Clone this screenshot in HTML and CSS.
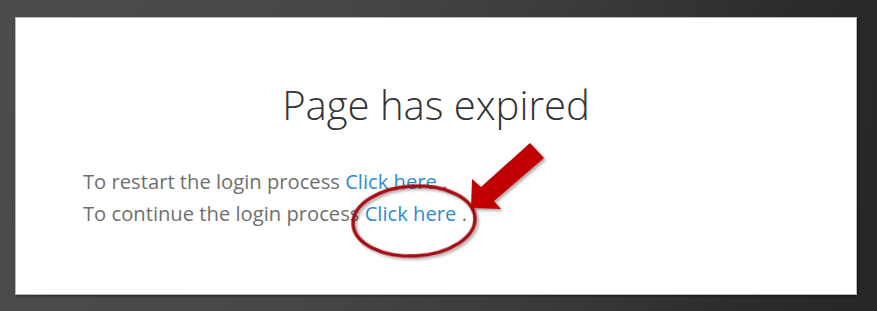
FILE: index.html
```html
<!DOCTYPE html>
<html lang="en">
  <head>
    <meta charset="UTF-8" />
    <meta name="viewport" content="width=device-width, initial-scale=1.0" />
    <title>Page has expired</title>
    <link rel="stylesheet" href="styles.css">
  </head>
  <body>
    <div class="panel">
      <h1 class="title">Page has expired</h1>
      <p class="line">To restart the login process <a href="#">Click here</a> .</p>
      <p class="line">To continue the login process <a href="#">Click here</a> .</p>
    </div>

    <!-- annotation drawn on top of the screenshot -->
    <svg class="marks" width="877" height="311" viewBox="0 0 877 311">
      <defs>
        <filter id="shade" x="-20%" y="-20%" width="150%" height="150%">
          <feDropShadow dx="2" dy="2" stdDeviation="1.5" flood-color="#000" flood-opacity="0.35" />
        </filter>
      </defs>
      <ellipse cx="414" cy="221" rx="61" ry="35" transform="rotate(-3 414 221)"
        fill="none" stroke="#a50d12" stroke-width="3.5" filter="url(#shade)" />
      <polygon points="530,143 544,158 494,201 501,209 471,208 472,179 481,187"
        fill="#c00000" filter="url(#shade)" />
    </svg>
  </body>
</html>
```

FILE: styles.css
```css
html,
body {
  margin: 0;
  height: 100%;
}

body {
  position: relative;
  overflow: hidden;
  background: linear-gradient(100deg, #4c4c4c 0%, #474747 35%, #3c3c3c 60%, #2c2c2c 85%, #262626 100%);
  font-family: "Open Sans", "Liberation Sans", sans-serif;
}

.panel {
  box-sizing: border-box;
  width: 842px;
  height: 278px;
  margin: 17px 0 0 15px;
  padding: 59px 20px 0 67px;
  background-color: #fff;
  border: 1px solid #b9b9b9;
  box-shadow: 1px 1px 2px rgba(0, 0, 0, 0.5);
}

.title {
  margin: 0 0 33px -47px;
  text-align: center;
  font-size: 40px;
  font-weight: 300;
  color: #333;
}

.line {
  margin: 0;
  font-size: 20.2px;
  line-height: 32px;
  color: #6f6f6f;
}

.line a {
  color: #2f8cd2;
  text-decoration: none;
}

.marks {
  position: absolute;
  top: 0;
  left: 0;
  pointer-events: none;
}
```
